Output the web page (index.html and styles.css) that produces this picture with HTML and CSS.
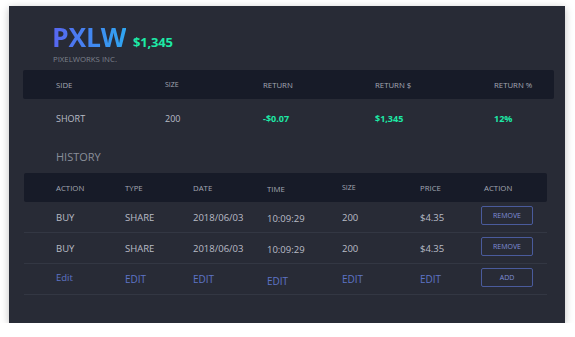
FILE: index.html
```html
<!DOCTYPE html>
<html>
<head>
<meta charset="utf-8">
<link rel="stylesheet" href="styles.css">
</head>
<body>
<div class="card">
  <div class="head">
    <div class="title-row">
      <span class="ticker">PXLW</span>
      <span class="price">$1,345</span>
    </div>
    <div class="company">PIXELWORKS INC.</div>
  </div>

  <div class="summary">
    <div class="sum-row sum-head">
      <span>SIDE</span><span class="small">SIZE</span><span>RETURN</span><span>RETURN $</span><span>RETURN %</span>
    </div>
    <div class="sum-row sum-data">
      <span>SHORT</span><span>200</span><span class="green">-$0.07</span><span class="green">$1,345</span><span class="green">12%</span>
    </div>
  </div>

  <div class="section-title">HISTORY</div>

  <div class="history">
    <div class="h-row h-head">
      <span>ACTION</span><span>TYPE</span><span>DATE</span><span class="low">TIME</span><span class="small">SIZE</span><span>PRICE</span><span>ACTION</span>
    </div>
    <div class="h-row h-data">
      <span>BUY</span><span>SHARE</span><span>2018/06/03</span><span class="low">10:09:29</span><span>200</span><span>$4.35</span><span><button class="btn">REMOVE</button></span>
    </div>
    <div class="h-row h-data">
      <span>BUY</span><span>SHARE</span><span>2018/06/03</span><span class="low">10:09:29</span><span>200</span><span>$4.35</span><span><button class="btn">REMOVE</button></span>
    </div>
    <div class="h-row h-data h-edit">
      <span class="up">Edit</span><span>EDIT</span><span>EDIT</span><span class="low">EDIT</span><span>EDIT</span><span>EDIT</span><span><button class="btn">ADD</button></span>
    </div>
  </div>
</div>
</body>
</html>
```

FILE: styles.css
```css
* { box-sizing: border-box; }
html, body { margin: 0; padding: 0; background: #ffffff; }
body { font-family: "Open Sans", "Noto Sans", sans-serif; }

.card {
  margin: 6px 0 0 9px;
  width: 556px;
  height: 317px;
  background: #282b36;
  box-shadow: 0 2px 8px rgba(0, 0, 0, 0.25);
  padding-top: 18px;
}

.head { padding-left: 43px; }
.title-row { display: flex; align-items: baseline; gap: 7px; height: 26px; }
.ticker {
  font-size: 26.5px;
  font-weight: 700;
  line-height: 26px;
  background: linear-gradient(90deg, #5865f0 0%, #2fa6f2 100%);
  -webkit-background-clip: text;
  background-clip: text;
  color: transparent;
  letter-spacing: -0.2px;
}
.price { font-size: 13px; font-weight: 700; line-height: 26px; color: #1de9a6; letter-spacing: -0.2px; }
.company { font-size: 7.8px; color: #7d818c; line-height: 9px; margin-top: 5px; margin-left: 1px; }

.summary { margin: 6px 0 0 14px; width: 531px; }
.sum-row {
  display: grid;
  grid-template-columns: 109px 98px 112px 119px 1fr;
  padding-left: 33px;
  align-items: center;
}
.sum-head {
  height: 29px;
  background: #171b28;
  border-radius: 2px;
  font-size: 7.8px;
  color: #a3a7b3;
}
.sum-data { height: 38px; font-size: 9px; color: #b9bcc6; }
.green { color: #1de9a6; font-weight: 700; }
.small { font-size: 7px; }

.section-title {
  margin: 12px 0 0 47px;
  font-size: 11px;
  color: #8a8e99;
  line-height: 15px;
}

.history { margin: 9px 0 0 15px; width: 523px; }
.h-row {
  display: grid;
  grid-template-columns: 69px 68px 74px 75px 78px 64px 1fr;
  padding-left: 32px;
  align-items: center;
}
.h-head {
  height: 29px;
  background: #171b28;
  border-radius: 2px;
  font-size: 7.8px;
  color: #a3a7b3;
}
.h-data {
  height: 31px;
  border-bottom: 1px solid #333743;
  font-size: 9.5px;
  color: #b9bcc6;
}
.low { padding-top: 3px; }
.h-edit { color: #5e74c6; font-size: 10px; }
.h-edit .up { font-size: 9.5px; padding-bottom: 3px; }

.btn {
  display: block;
  margin: -4px 0 0 -3px;
  width: 52px;
  height: 19px;
  background: transparent;
  border: 1px solid #4a5b9c;
  border-radius: 2px;
  color: #7f8fd8;
  font-family: "Open Sans", "Noto Sans", sans-serif;
  font-size: 7px;
  padding: 0;
  line-height: 17px;
}
```
